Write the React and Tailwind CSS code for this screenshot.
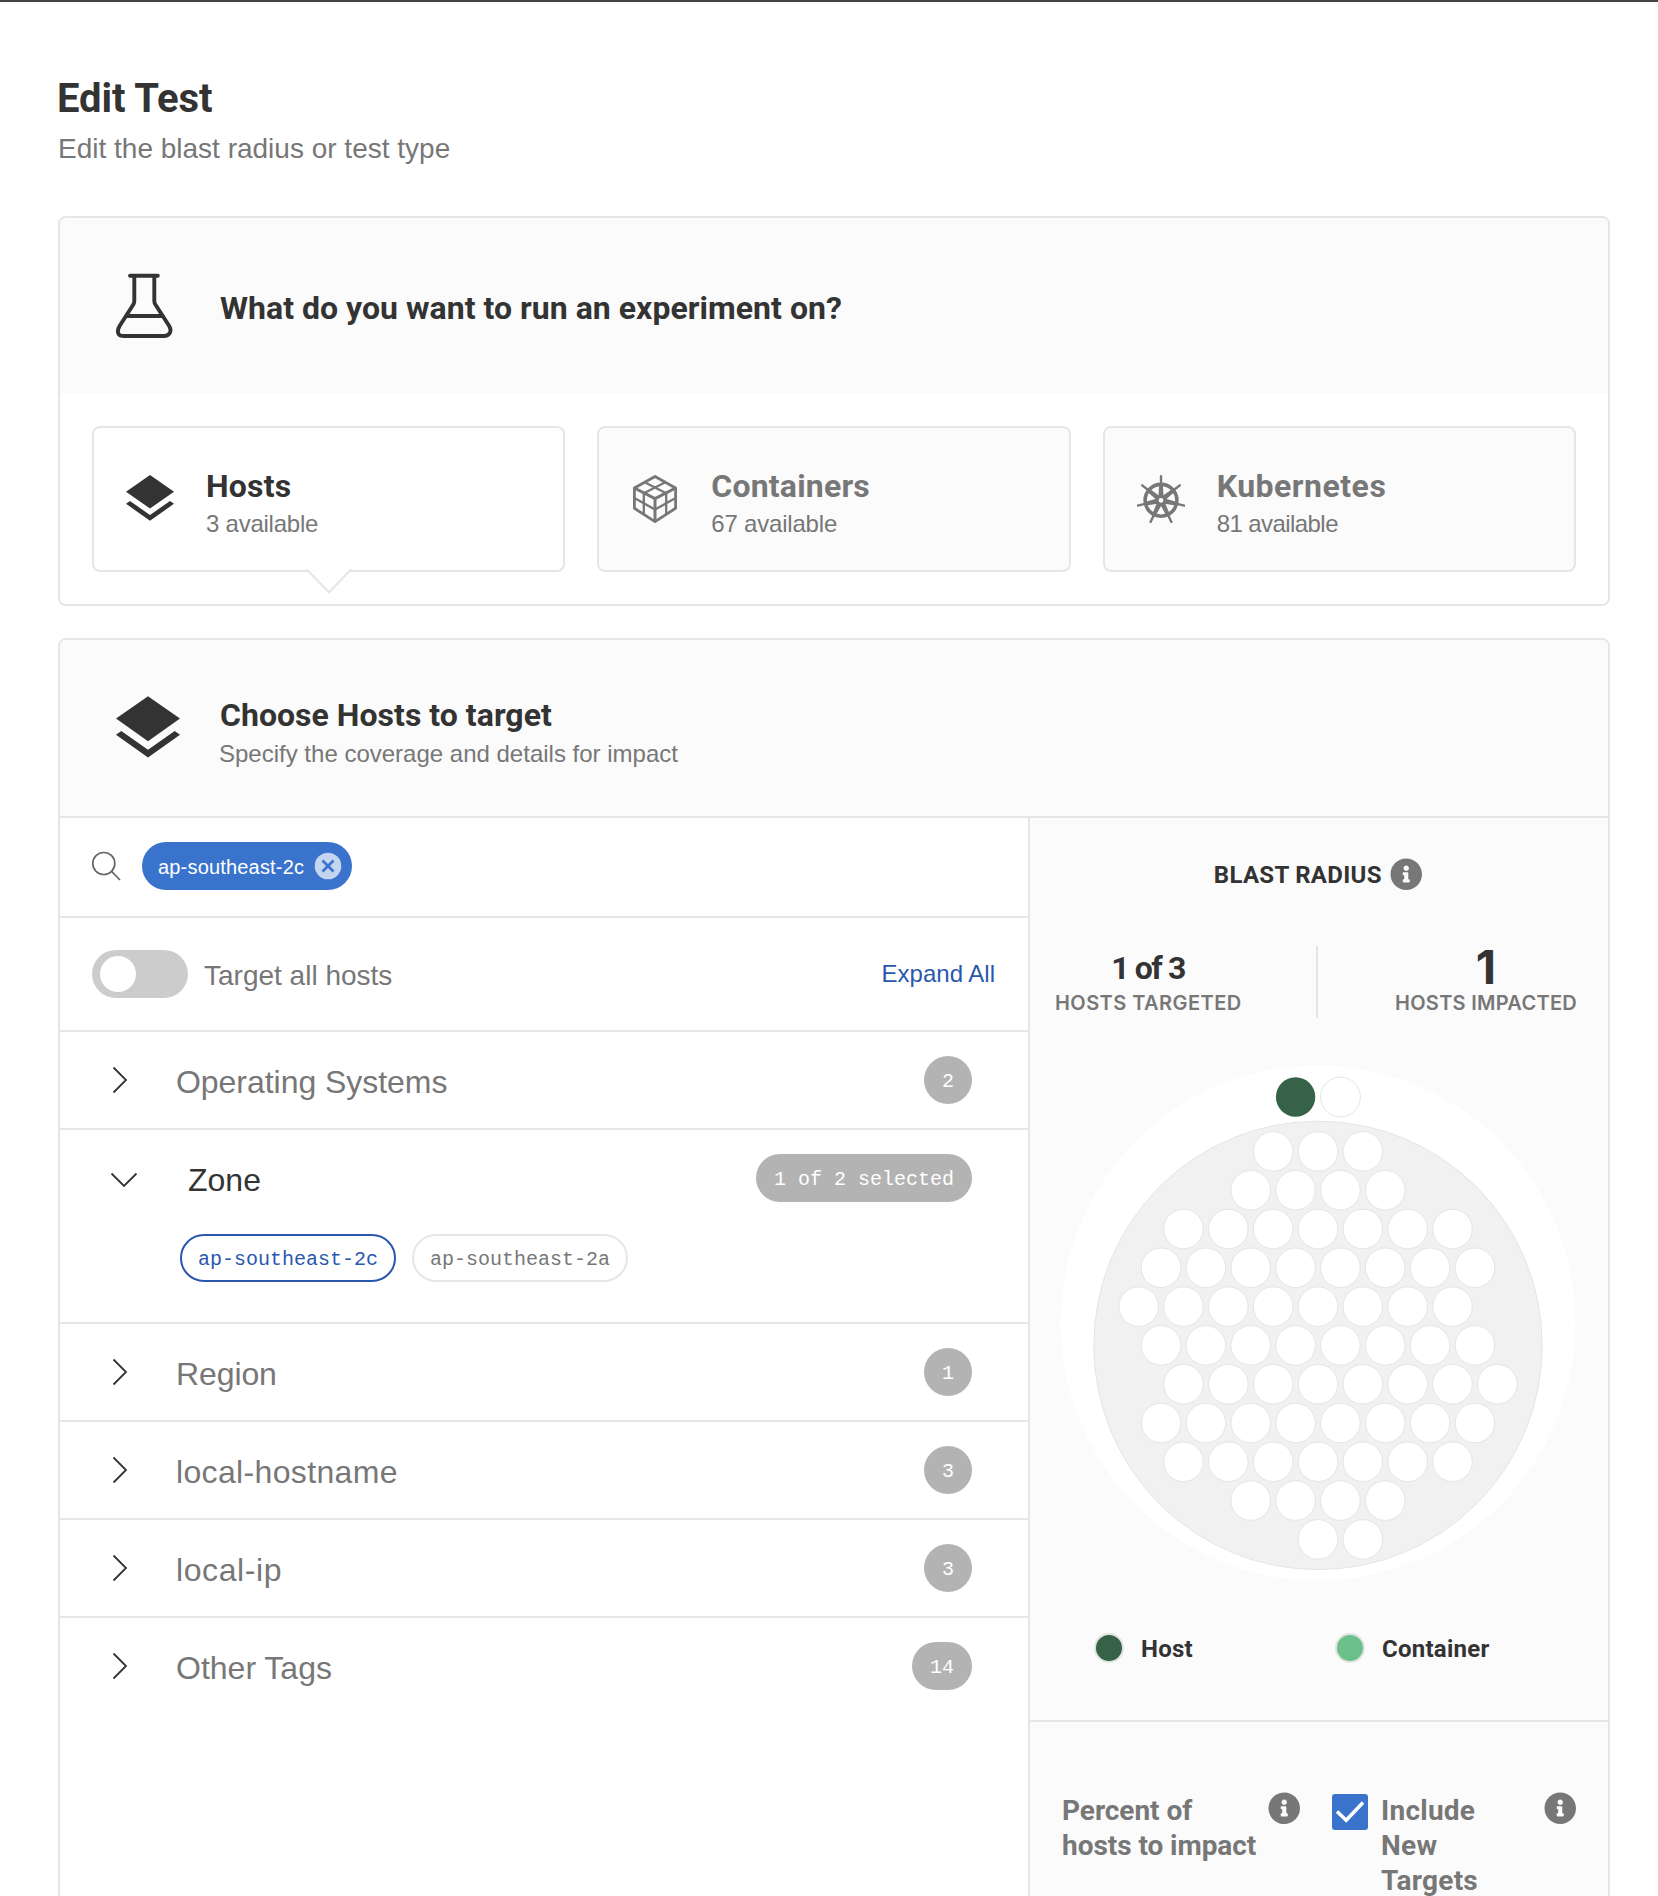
import React from "react";
import { FaInfoCircle } from "react-icons/fa";

const BOLD = "font-['Roboto',sans-serif] font-bold";

function Layers({ className }) {
  return (
    <svg viewBox="0 0 48 46" className={className} fill="#333333">
      <path d="M24 0 48 16.7 24 33.6 0 16.7Z" />
      <path d="M4 26 24 40 44 26 48 28.8 24 45.8 0 28.8Z" />
    </svg>
  );
}

function Flask() {
  return (
    <svg viewBox="0 0 64 68" className="h-[68px] w-16" fill="none" stroke="#333333" strokeWidth="3.9" strokeLinecap="round" strokeLinejoin="round">
      <path d="M14 3.8H41.8" />
      <path d="M18.3 4V29Q18.3 31 17 33L3.6 54Q.2 60 3.6 63.2Q5.5 64 8.500 64H48Q52.500 64 54 60.500Q55.200 57.500 53.200 54L39.700 33Q38.300 31 38.300 29V4" />
      <path d="M9.500 44H47.500" strokeLinecap="butt" />
    </svg>
  );
}

function Cube() {
  return (
    <svg viewBox="0 0 48 48" className="size-12" fill="none" stroke="#777777" strokeWidth="2.8" strokeLinejoin="round">
      <path d="M24 1.500 44.600 13V33.300L24 46.600 3.400 33.300V13Z" />
      <path d="M3.400 13 24 23.600 44.600 13M24 23.600V46.600" strokeWidth="3" />
      <path d="M13.700 7.200 35.200 18.200V39.400M34.300 7.200 12.800 18.200V39.400M3.400 23 24 34.600 44.600 23" strokeWidth="2.300" />
    </svg>
  );
}

const SPOKES = [0, 1, 2, 3, 4, 5, 6];

function Wheel() {
  return (
    <svg viewBox="0 0 48 48" className="size-12" fill="none" stroke="#777777">
      <circle cx="24" cy="25.300" r="15.900" strokeWidth="3.600" />
      {SPOKES.map((i) => (
        <g key={i} transform={`rotate(${(i * 360) / 7} 24 25.3)`}>
          <path d="M24 1.300V10" strokeWidth="2.400" strokeLinecap="round" />
          <path d="M22.100 10H25.900L26.500 21H21.500Z" fill="#777777" stroke="none" />
        </g>
      ))}
      <circle cx="24" cy="25.300" r="4" strokeWidth="3.200" fill="#fbfbfb" />
    </svg>
  );
}

function OptionCard({ icon, title, count, active, titleClass, countClass }) {
  return (
    <div className={`relative flex h-[146px] rounded-lg border-2 border-[#e6e6e6] pl-8 ${active ? "bg-white" : "bg-[#fbfbfb]"}`}>
      <div className="mt-[47px] mr-8 w-12">{icon}</div>
      <div className="pt-[38px]">
        <div className={`${BOLD} text-[32px] leading-10 ${active ? "text-[#333333]" : "text-[#777777]"} ${titleClass}`}>{title}</div>
        <div className={`mt-1 text-2xl leading-7 text-[#777777] ${countClass}`}>{count}</div>
      </div>
      {active && (
        <svg viewBox="0 0 48 26" className="absolute -bottom-[25px] left-[211px] h-[26px] w-12">
          <path d="M1.500 0 24 23.500 46.500 0Z" fill="#ffffff" />
          <path d="M1.500 0 24 23.500 46.500 0" fill="none" stroke="#e6e6e6" strokeWidth="2" />
        </svg>
      )}
    </div>
  );
}

function Badge({ children }) {
  return (
    <span className="flex h-12 items-center rounded-full bg-[#b3b3b3] px-[18px] pt-[4px] font-['Liberation_Mono',monospace] text-xl leading-6 text-white">
      {children}
    </span>
  );
}

function Row({ label, badge, open, labelClass }) {
  return (
    <div className="flex h-24 items-center pr-14 pl-[50px]">
      {open ? (
        <svg viewBox="0 0 30 18" className="mt-[3px] h-[18px] w-[30px]" fill="none" stroke="#333333" strokeWidth="1.8">
          <path d="M1.500 2.500 14 15 26.500 2.500" />
        </svg>
      ) : (
        <svg viewBox="0 0 18 30" className="mr-3 h-[30px] w-[18px]" fill="none" stroke="#333333" strokeWidth="1.8">
          <path d="M3.500 2.500 16 15 3.500 27.500" />
        </svg>
      )}
      <div className={`mt-[4px] text-[32px] leading-10 ${open ? "ml-12 text-[#333333]" : "ml-[36px] text-[#777777]"} ${labelClass}`}>{label}</div>
      <div className="ml-auto">
        <Badge>{badge}</Badge>
      </div>
    </div>
  );
}

const LINE = "border-b-2 border-[#e6e6e6]";

const DOT_ROWS = [
  [-2, 3], [-3, 4], [-6, 7], [-7, 8], [-8, 8], [-7, 8], [-6, 8], [-7, 8], [-6, 7], [-3, 4], [0, 2],
];

function BlastChart() {
  return (
    <svg viewBox="0 0 516 516" className="mt-[47px] ml-[30px] h-[516px] w-[516px]">
      <circle cx="258" cy="258" r="257.400" fill="#ffffff" />
      <circle cx="258" cy="280.400" r="224.200" fill="#f1f1f1" stroke="#e5e5e5" />
      <circle cx="235.600" cy="32" r="19.700" fill="#366247" />
      <circle cx="280.400" cy="32" r="19.900" fill="#ffffff" stroke="#e6e6e6" />
      {DOT_ROWS.map(([start, count], r) =>
        Array.from({ length: count }, (_, i) => (
          <circle key={`${r}-${i}`} cx={258 + (start + 2 * i) * 22.42} cy={86.4 + r * 38.8} r="19.800" fill="#ffffff" stroke="#e5e5e5" />
        ))
      )}
    </svg>
  );
}

function Info() {
  return <FaInfoCircle size={32.5} color="#777777" className="shrink-0" />;
}

export default function App() {
  return (
    <div className="h-[1896px] w-[1658px] overflow-hidden border-t-2 border-[#444444] bg-white px-[48px] font-['Liberation_Sans',Arial,sans-serif]">
      <div className="mx-[10px] w-[1552px] pt-[73px]">
        <h1 className={`${BOLD} -ml-px text-[40px] leading-[48px] tracking-[-0.1px] text-[#333333]`}>Edit Test</h1>
        <p className="mt-2 text-[28px] leading-9 text-[#777777]">Edit the blast radius or test type</p>

        <section className="mt-[49px] overflow-hidden rounded-lg border-2 border-[#e6e6e6] bg-white">
          <div className="flex h-44 items-center bg-[#fbfbfb] pl-14">
            <Flask />
            <h2 className={`${BOLD} mt-1 ml-10 text-[32px] leading-10 tracking-[0.03px] text-[#333333]`}>What do you want to run an experiment on?</h2>
          </div>
          <div className="grid grid-cols-3 gap-8 p-8">
            <OptionCard active icon={<Layers className="h-[46px] w-12" />} title="Hosts" count="3 available" titleClass="tracking-[0.2px]" countClass="tracking-[-0.24px]" />
            <OptionCard icon={<Cube />} title="Containers" count="67 available" titleClass="tracking-[0.19px]" countClass="tracking-[-0.2px]" />
            <OptionCard icon={<Wheel />} title="Kubernetes" count="81 available" titleClass="tracking-[0.5px]" countClass="tracking-[-0.57px]" />
          </div>
        </section>

        <section className="mt-8 h-[1400px] overflow-hidden rounded-lg border-2 border-[#e6e6e6] bg-white">
          <div className={`flex h-[178px] bg-[#fbfbfb] pl-14 ${LINE}`}>
            <Layers className="mt-14 h-[62px] w-16" />
            <div className="ml-10 pt-[55px]">
              <h2 className={`${BOLD} text-[32px] leading-10 tracking-[0.03px] text-[#333333]`}>Choose Hosts to target</h2>
              <p className="mt-[5px] -ml-px text-2xl leading-7 text-[#777777]">Specify the coverage and details for impact</p>
            </div>
          </div>

          <div className="flex h-[1220px]">
            <div className="w-[968px]">
              <div className={`flex h-[100px] items-center pb-[2px] pl-[31px] ${LINE}`}>
                <svg viewBox="0 0 32 32" className="size-8" fill="none" stroke="#666666" strokeWidth="1.700">
                  <circle cx="12.800" cy="13.500" r="11" />
                  <path d="M20.600 21.300 29 30" />
                </svg>
                <span className="ml-[19px] flex h-12 w-[210px] items-center rounded-full bg-[#3a73cc] pl-[16px] text-xl leading-6 text-white">
                  <span className="mt-[2px] w-[156px] tracking-[0.18px]">ap-southeast-2c</span>
                  <svg viewBox="0 0 28 28" className="size-7">
                    <circle cx="14" cy="14" r="13.300" fill="#c4d5f0" />
                    <path d="M8.500 8.500 19.500 19.500M19.500 8.500 8.500 19.500" stroke="#3a73cc" strokeWidth="2.700" />
                  </svg>
                </span>
              </div>

              <div className={`flex h-[114px] items-center pr-[33px] pl-8 ${LINE}`}>
                <span className="flex h-12 w-24 items-center rounded-full bg-[#cccccc] pl-2">
                  <span className="size-9 rounded-full bg-white" />
                </span>
                <span className="mt-[3px] ml-4 text-[28px] leading-9 text-[#777777]">Target all hosts</span>
                <span className="ml-auto text-2xl leading-7 text-[#2a57ae]">Expand All</span>
              </div>

              <div className={LINE}><Row label="Operating Systems" badge="2" labelClass="tracking-[-0.04px]" /></div>
              <div className={`h-[194px] ${LINE}`}>
                <Row open label="Zone" badge="1 of 2 selected" />
                <div className="mt-2 flex gap-4 pl-[120px] font-['Liberation_Mono',monospace] text-xl leading-6">
                  <span className="flex h-12 items-center rounded-full border-2 border-[#2a57ae] px-4 pt-[4px] text-[#2a57ae]">ap-southeast-2c</span>
                  <span className="flex h-12 items-center rounded-full border-2 border-[#e6e6e6] px-4 pt-[4px] text-[#777777]">ap-southeast-2a</span>
                </div>
              </div>
              <div className={LINE}><Row label="Region" badge="1" labelClass="tracking-[-0.1px]" /></div>
              <div className={LINE}><Row label="local-hostname" badge="3" labelClass="tracking-[0.35px]" /></div>
              <div className={LINE}><Row label="local-ip" badge="3" labelClass="tracking-[0.6px]" /></div>
              <Row label="Other Tags" badge="14" />
            </div>

            <aside className="w-[580px] border-l-2 border-[#e6e6e6] bg-[#fbfbfb]">
              <div className={`h-[904px] pt-10 ${LINE}`}>
                <div className="flex h-8 items-center justify-center gap-2 pr-[2px]">
                  <h3 className={`${BOLD} mt-px text-2xl leading-8 tracking-[0.3px] text-[#333333]`}>BLAST RADIUS</h3>
                  <Info />
                </div>
                <div className="mt-14 flex justify-between pr-[31px] pl-[25px] text-center">
                  <div className="w-[186px] pt-[2px]">
                    <div className={`${BOLD} text-[32px] leading-10 tracking-[-1.4px] text-[#333333]`}>1 of 3</div>
                    <div className="mt-[3px] font-['Inter',sans-serif] text-xl leading-6 font-semibold tracking-[0.44px] whitespace-nowrap text-[#777777]">HOSTS TARGETED</div>
                  </div>
                  <div className="-ml-[2px] h-[72px] w-[2px] bg-[#e6e6e6]" />
                  <div className="w-[182px] pt-px">
                    <div className="font-['Inter',sans-serif] text-[47px] leading-10 font-bold text-[#333333]">1</div>
                    <div className="mt-1 font-['Inter',sans-serif] text-xl leading-6 font-semibold tracking-[0.28px] whitespace-nowrap text-[#777777]">HOSTS IMPACTED</div>
                  </div>
                </div>
                <BlastChart />
                <div className={`${BOLD} mt-[51px] flex items-center pl-16 text-2xl leading-[30px] tracking-[0.25px] text-[#333333]`}>
                  <span className="size-[30px] rounded-full border-2 border-[#e0e4e0] bg-[#366247]" />
                  <span className="mt-[2px] ml-[17px] w-[194px]">Host</span>
                  <span className="size-[30px] rounded-full border-2 border-[#e0e4e0] bg-[#6bbf8b]" />
                  <span className="mt-[2px] ml-[17px]">Container</span>
                </div>
              </div>

              <div className={`${BOLD} flex pt-[70px] pr-8 pl-8 text-[28px] leading-[35px] text-[#777777]`}>
                <div className="mt-px w-[206px] tracking-[-0.05px]">Percent of<br />hosts to impact</div>
                <Info />
                <svg viewBox="0 0 36 36" className="mt-[2px] ml-[31.5px] size-9">
                  <rect width="36" height="36" rx="3" fill="#3a73cc" />
                  <path d="M5 17.500 14.200 26.200 31 8.500" fill="none" stroke="#ffffff" strokeWidth="3.500" />
                </svg>
                <div className="mt-px ml-[13px] w-[110px] tracking-[0.25px]">Include<br />New<br />Targets</div>
                <div className="ml-auto"><Info /></div>
              </div>
            </aside>
          </div>
        </section>
      </div>
    </div>
  );
}
